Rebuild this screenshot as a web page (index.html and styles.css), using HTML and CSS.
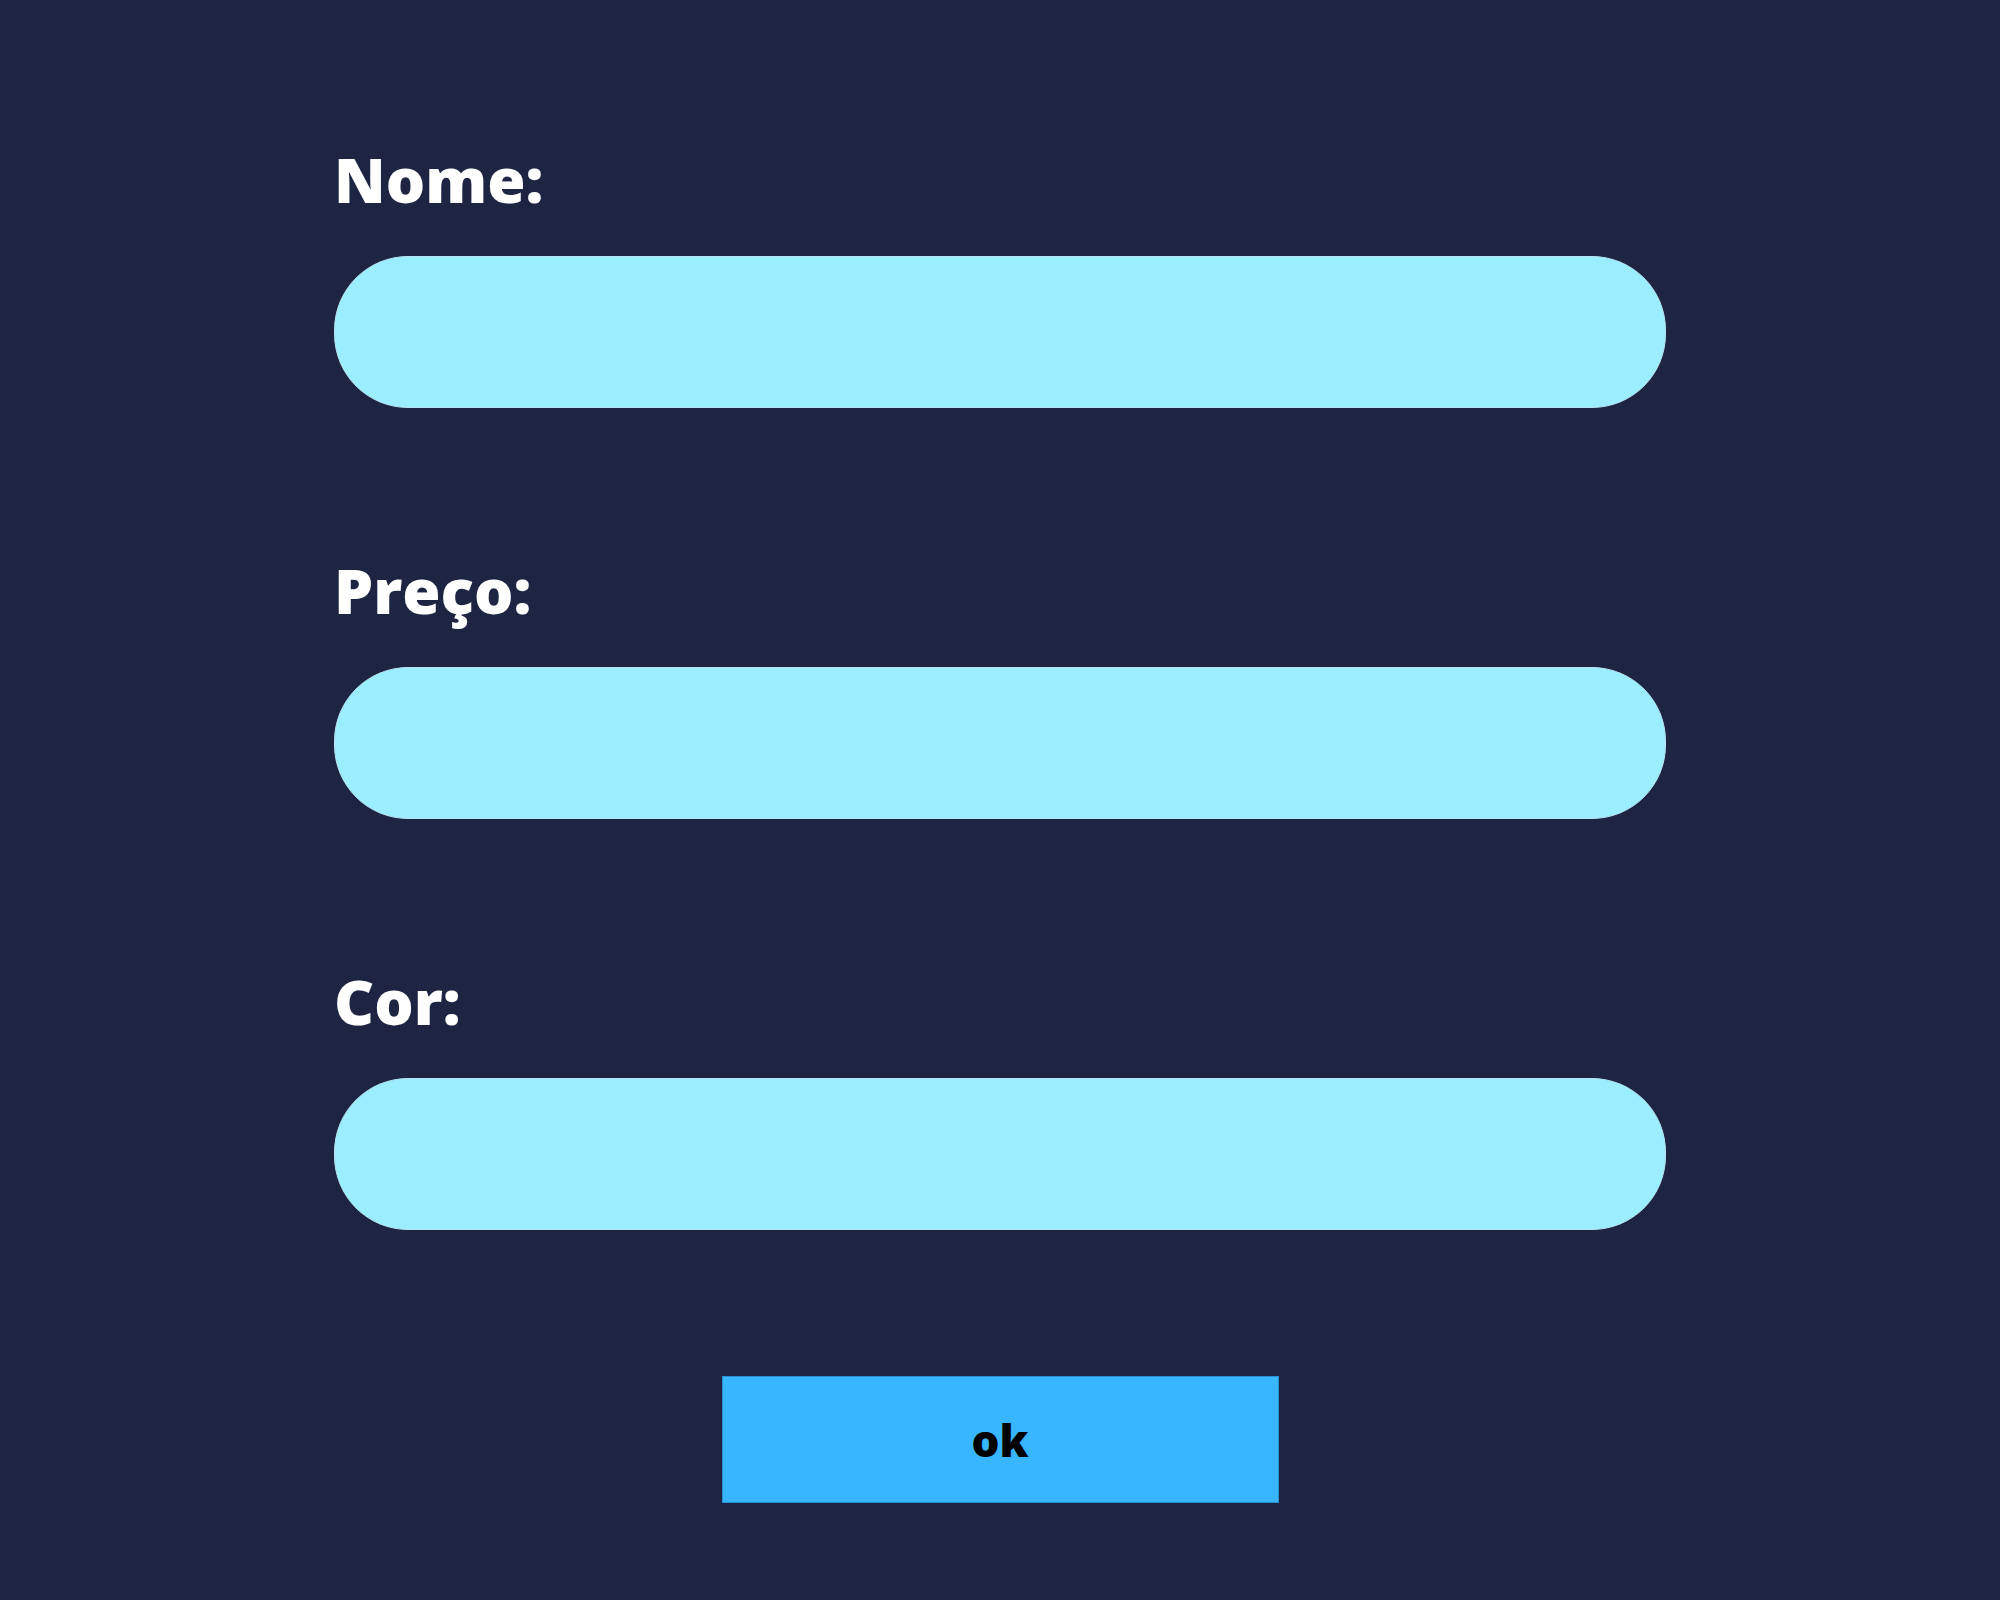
FILE: index.html
```html
<!DOCTYPE html>
<html lang="pt">
<head>
<meta charset="utf-8">
<title>Formulário</title>
<link rel="stylesheet" href="styles.css">
</head>
<body>
<form class="form">
  <div class="field">
    <label class="label" for="nome">Nome:</label>
    <input class="input" id="nome" type="text">
  </div>
  <div class="field">
    <label class="label" for="preco">Preço:</label>
    <input class="input" id="preco" type="text">
  </div>
  <div class="field">
    <label class="label" for="cor">Cor:</label>
    <input class="input" id="cor" type="text">
  </div>
  <div class="actions">
    <button class="btn" type="button">ok</button>
  </div>
</form>
</body>
</html>
```
FILE: styles.css
```css
html, body {
  margin: 0;
  padding: 0;
  background: #1d2543;
  height: 100%;
}
body {
  font-family: "Open Sans", "Liberation Sans", sans-serif;
}
.form {
  width: 1332px;
  margin: 0 auto;
  padding-top: 149px;
  display: flex;
  flex-direction: column;
  gap: 152px;
}
.field {
  display: flex;
  flex-direction: column;
  gap: 47px;
}
.label {
  display: block;
  color: #ffffff;
  font-weight: 800;
  font-size: 62px;
  line-height: 60px;
}
.input {
  box-sizing: border-box;
  display: block;
  width: 100%;
  height: 152px;
  margin: 0;
  border: 1px solid #b6e4f0;
  border-radius: 74px;
  background: #9aeeff;
  outline: none;
}
.actions {
  display: flex;
  justify-content: center;
  margin-top: -6px;
}
.btn {
  box-sizing: border-box;
  width: 557px;
  height: 127px;
  background: #38b6ff;
  border: 1px solid #2a8fd2;
  color: #000;
  font-family: "Open Sans", "Liberation Sans", sans-serif;
  font-weight: 800;
  font-size: 44px;
  padding: 0;
}
```
